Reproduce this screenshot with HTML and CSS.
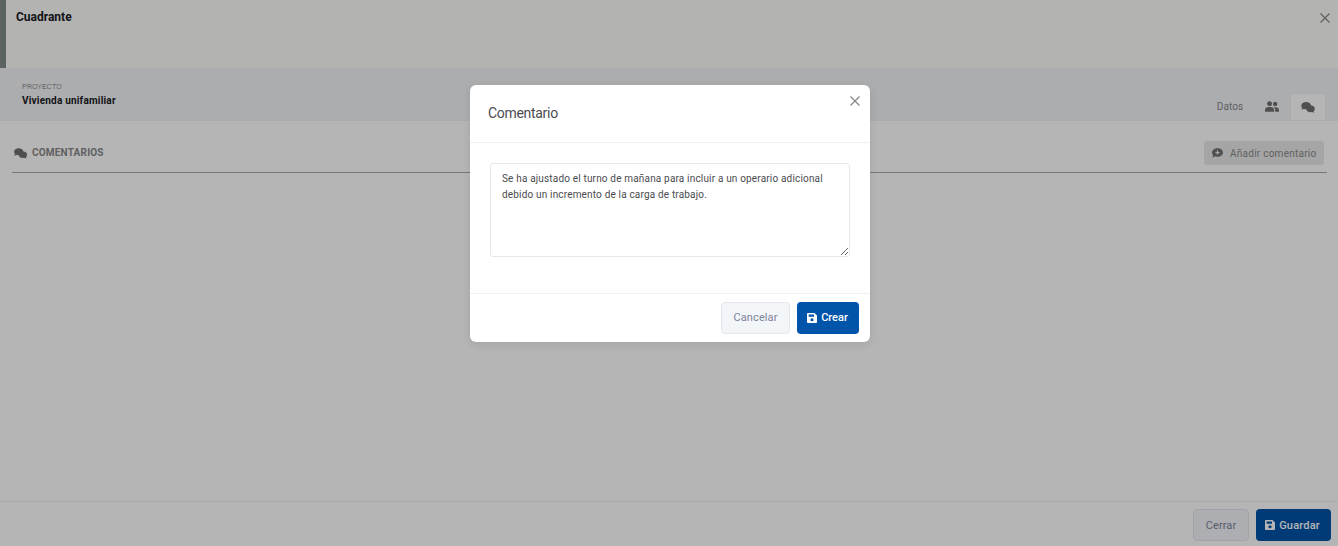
FILE: index.html
```html
<!DOCTYPE html>
<html lang="es">
<head>
<meta charset="utf-8">
<title>Cuadrante</title>
<link rel="stylesheet" href="styles.css">
</head>
<body>
<svg class="defs" width="0" height="0" aria-hidden="true">
  <symbol id="i-comments" viewBox="0 0 16 13">
    <ellipse cx="5.800" cy="4.400" rx="5.800" ry="4.400"/>
    <path d="M1.500 6.500L.3 9.200l3.500-1.200z"/>
    <ellipse cx="11" cy="8" rx="5" ry="4"/>
    <path d="M14 10l1.700 2.800-4-1.300z"/>
  </symbol>
  <symbol id="i-users" viewBox="0 0 16 12">
    <circle cx="5.200" cy="2.800" r="2.800"/>
    <circle cx="11.600" cy="3" r="2.500"/>
    <path d="M0 12v-1.800C0 8 1.800 6.600 4 6.600h2.400c2.200 0 4 1.400 4 3.600V12z"/>
    <path d="M11.600 12h4.400v-1.800c0-2-1.500-3.400-3.500-3.400h-2c-.3 0-.5 0-.7.100 1.100.8 1.800 2 1.800 3.400z"/>
  </symbol>
  <symbol id="i-comment-plus" viewBox="0 0 14 12">
    <path fill-rule="evenodd" d="M7 0C3.100 0 0 2.400 0 5.400c0 1.300.6 2.500 1.500 3.400C1.200 10 .5 11 0 11.600c1.500 0 2.900-.6 3.900-1.400.9.400 2 .6 3.100.6 3.900 0 7-2.400 7-5.400S10.900 0 7 0zM6.200 2.800h1.600v1.800h1.800v1.600H7.800V8H6.200V6.200H4.400V4.600h1.800z"/>
  </symbol>
  <symbol id="i-save" viewBox="0 0 12 12">
    <path fill-rule="evenodd" d="M1.300 0h7.600L12 3v7.700c0 .7-.6 1.300-1.300 1.300H1.300C.6 12 0 11.400 0 10.700V1.300C0 .6.600 0 1.300 0zM2 1.800v2.700h6.400V1.800zM6 6.200a1.900 1.900 0 1 0 0 3.800 1.900 1.900 0 0 0 0-3.800z"/>
  </symbol>
</svg>

<div class="page">
  <header class="head">
    <span class="head-accent"></span>
    <h1 class="head-title">Cuadrante</h1>
    <span class="head-close">
      <svg class="x-icon" viewBox="0 0 10 10"><path d="M.5.500l9 9M9.500.500l-9 9"/></svg>
    </span>
  </header>

  <section class="project">
    <div class="project-info">
      <div class="project-label">PROYECTO</div>
      <div class="project-name">Vivienda unifamiliar</div>
    </div>
    <nav class="tabs">
      <span class="tab tab-text">Datos</span>
      <span class="tab tab-icon"><svg class="tab-svg"><use href="#i-users"/></svg></span>
      <span class="tab tab-icon tab-active"><svg class="tab-svg"><use href="#i-comments"/></svg></span>
    </nav>
  </section>

  <main class="content">
    <div class="section-head">
      <h2 class="section-title"><svg class="section-icon"><use href="#i-comments"/></svg>COMENTARIOS</h2>
      <button class="add-btn" type="button"><svg class="add-icon"><use href="#i-comment-plus"/></svg>Añadir comentario</button>
    </div>
  </main>

  <footer class="foot">
    <button class="btn btn-light" type="button">Cerrar</button>
    <button class="btn btn-primary btn-guardar" type="button"><svg class="btn-icon"><use href="#i-save"/></svg>Guardar</button>
  </footer>
</div>

<div class="backdrop"></div>

<div class="modal">
  <div class="modal-head">
    <h3 class="modal-title">Comentario</h3>
    <svg class="x-icon modal-close" viewBox="0 0 10 10"><path d="M.5.500l9 9M9.500.500l-9 9"/></svg>
  </div>
  <div class="modal-body">
    <textarea class="modal-text" spellcheck="false">Se ha ajustado el turno de mañana para incluir a un operario adicional debido un incremento de la carga de trabajo.</textarea>
  </div>
  <div class="modal-foot">
    <button class="btn btn-light btn-cancel" type="button">Cancelar</button>
    <button class="btn btn-primary btn-crear" type="button"><svg class="btn-icon"><use href="#i-save"/></svg>Crear</button>
  </div>
</div>
</body>
</html>
```

FILE: styles.css
```css
* { box-sizing: border-box; }
html, body { height: 100%; }
body {
  margin: 0;
  overflow: hidden;
  background: #fff;
  color: #1a1a24;
  font-family: Roboto, "Liberation Sans", sans-serif;
}
.defs { position: absolute; }
.page {
  height: 546px;
  display: flex;
  flex-direction: column;
}
.head {
  height: 68px;
  flex: none;
  display: flex;
  align-items: flex-start;
  background: #fdfdfb;
}
.head-accent {
  width: 6px;
  height: 68px;
  background: #7f8b8b;
}
.head-title {
  margin: 10px 0 0 10px;
  font-size: 12px;
  line-height: 14px;
  font-weight: 700;
  flex: 1;
}
.head-close {
  margin: 13px 8px 0 0;
  display: flex;
}
.x-icon {
  width: 10px;
  height: 10px;
  fill: none;
  stroke: #858585;
  stroke-width: 1.200;
}
.project {
  height: 53px;
  flex: none;
  display: flex;
  justify-content: space-between;
  padding: 0 12px 0 22px;
  background: #f3f4f7;
  border-bottom: 1px solid #eff2f5;
}
.project-info { padding-top: 14px; }
.project-label {
  font-size: 8px;
  line-height: 10px;
  font-weight: 300;
  color: #6c6c6c;
}
.project-name {
  margin-top: 3px;
  font-size: 10px;
  line-height: 12px;
  font-weight: 700;
  letter-spacing: .2px;
}
.tabs {
  display: flex;
  align-items: flex-end;
  align-self: flex-end;
}
.tab {
  height: 27px;
  display: flex;
  align-items: center;
  justify-content: center;
  color: #85858a;
  font-size: 10px;
  letter-spacing: .1px;
}
.tab-text {
  width: 44px;
  padding-right: 4px;
}
.tab-icon { width: 36px; }
.tab-svg {
  width: 14px;
  height: 11px;
  fill: #707070;
}
.tab-active {
  background: #fff;
  border: 1px solid #eff2f5;
  border-bottom: 0;
  border-radius: 2px 2px 0 0;
}
.content {
  flex: 1;
  padding: 19px 11px 0 12px;
  background: #fff;
}
.section-head {
  height: 33px;
  display: flex;
  align-items: flex-start;
  justify-content: space-between;
  border-bottom: 1px solid #a9a9a9;
}
.section-title {
  margin: 7px 0 0 2px;
  display: flex;
  align-items: center;
  font-size: 10px;
  line-height: 12px;
  font-weight: 700;
  letter-spacing: .2px;
  color: #888;
}
.section-icon {
  width: 13px;
  height: 11px;
  margin-right: 5px;
  fill: #707070;
}
.add-btn {
  width: 120px;
  height: 24px;
  margin: 1px 3px 0 0;
  padding: 0 0 0 8px;
  display: flex;
  align-items: center;
  border: 0;
  border-radius: 3px;
  background: #e9e9e9;
  color: #888;
  font-family: inherit;
  font-size: 10px;
  letter-spacing: .25px;
}
.add-icon {
  width: 11px;
  height: 10px;
  margin-right: 7px;
  fill: #707070;
}
.foot {
  height: 45px;
  flex: none;
  display: flex;
  justify-content: flex-end;
  gap: 7px;
  padding: 7px 7px 0 0;
  background: #fff;
  border-top: 1px solid #eff2f5;
}
.btn {
  height: 32px;
  padding: 0;
  display: flex;
  align-items: center;
  justify-content: center;
  border-radius: 4px;
  font-family: inherit;
  font-size: 11px;
  border: 0;
}
.btn-light {
  width: 56px;
  background: #f3f6f9;
  border: 1px solid #e4e6ef;
  color: #7e8299;
  letter-spacing: .1px;
}
.btn-primary {
  background: #0054aa;
  color: #fff;
  font-weight: 500;
}
.btn-guardar {
  width: 75px;
  letter-spacing: .2px;
  padding-right: 2px;
}
.btn-cancel {
  width: 69px;
  padding-bottom: 2px;
}
.btn-crear {
  width: 62px;
  padding-bottom: 1px;
  padding-right: 1px;
}
.btn-icon {
  width: 10px;
  height: 10px;
  margin-right: 4px;
  fill: #fff;
}
.backdrop {
  position: absolute;
  inset: 0;
  background: rgba(0, 0, 0, .29);
}
.modal {
  position: absolute;
  left: 470px;
  top: 85px;
  width: 400px;
  height: 257px;
  display: flex;
  flex-direction: column;
  background: #fff;
  border-radius: 6px;
  box-shadow: 0 2px 8px rgba(0, 0, 0, .1);
}
.modal-head {
  height: 58px;
  flex: none;
  position: relative;
  padding: 20px 18px 0;
  border-bottom: 1px solid #eff2f5;
}
.modal-title {
  margin: 0;
  font-size: 14px;
  line-height: 17px;
  font-weight: 400;
  letter-spacing: -.3px;
  color: #4b4b4f;
}
.modal-close {
  position: absolute;
  right: 10px;
  top: 11px;
}
.modal-body {
  flex: 1;
  padding: 20px 20px 0;
}
.modal-text {
  display: block;
  width: 360px;
  height: 94px;
  padding: 7px 11px;
  border: 1px solid #e8e8ec;
  border-radius: 3px;
  outline: 0;
  color: #4b4b4f;
  font-family: inherit;
  font-size: 10px;
  line-height: 16px;
  letter-spacing: .17px;
  resize: vertical;
}
.modal-foot {
  height: 49px;
  flex: none;
  display: flex;
  justify-content: flex-end;
  gap: 7px;
  padding: 8px 11px 0 0;
  border-top: 1px solid #eff2f5;
}
```
